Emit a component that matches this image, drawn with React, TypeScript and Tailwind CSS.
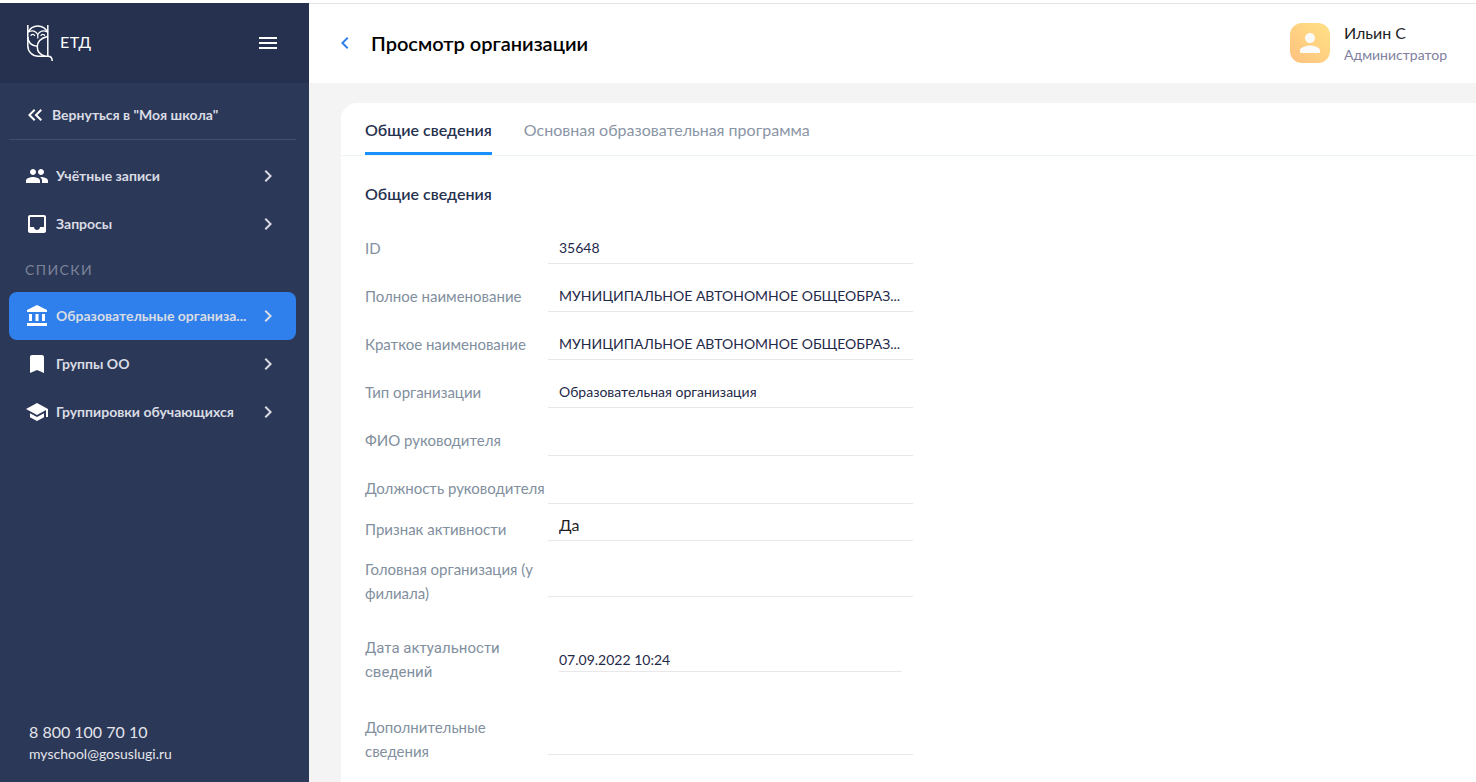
import type { ReactNode } from "react";
import clsx from "clsx";
import {
  MdAccountBalance,
  MdBookmark,
  MdChevronLeft,
  MdChevronRight,
  MdInbox,
  MdKeyboardDoubleArrowLeft,
  MdMenu,
  MdPeople,
  MdPerson,
  MdSchool,
} from "react-icons/md";

type NavItemProps = {
  icon: ReactNode;
  label: string;
  active?: boolean;
};

type Field = {
  id: string;
  label: string;
  value: string;
  rowClassName?: string;
  labelClassName?: string;
  fieldClassName?: string;
};

const defaultFieldClassName = "mb-2 px-[11px] pb-1 text-sm text-[#1f2a4a]";

const fields: Field[] = [
  { id: "org-id", label: "ID", value: "35648" },
  { id: "full-name", label: "Полное наименование", value: "МУНИЦИПАЛЬНОЕ АВТОНОМНОЕ ОБЩЕОБРАЗ..." },
  { id: "short-name", label: "Краткое наименование", value: "МУНИЦИПАЛЬНОЕ АВТОНОМНОЕ ОБЩЕОБРАЗ..." },
  { id: "org-type", label: "Тип организации", value: "Образовательная организация" },
  { id: "head-name", label: "ФИО руководителя", value: "" },
  { id: "head-position", label: "Должность руководителя", value: "" },
  {
    id: "is-active",
    label: "Признак активности",
    value: "Да",
    rowClassName: "h-[34px]",
    fieldClassName: "mb-[5px] px-[11px] pb-1 text-base text-[#1f1f1f]",
  },
  { id: "parent-org", label: "Головная организация (у филиала)", value: "", rowClassName: "mt-[11px] h-12" },
  {
    id: "updated-at",
    label: "Дата актуальности сведений",
    value: "07.09.2022 10:24",
    rowClassName: "mt-[31px] h-12",
    labelClassName: "font-['Roboto',sans-serif]",
    fieldClassName: "mx-[11px] mb-3 text-sm text-[#1f2a4a]",
  },
  { id: "extra", label: "Дополнительные сведения", value: "", rowClassName: "mt-[31px] h-12" },
];

function OwlLogo() {
  return (
    <svg className="h-[38px] w-7" fill="none" stroke="white" strokeWidth="1.5" viewBox="0 0 28 38">
      <path d="M1.8 1v20.500C1.800 28 6.500 32.300 12.500 32.300H22c2.600 0 4.200 1.400 4.200 4.700" />
      <path d="M21.800 1v31.300" />
      <path d="M1.800 8.500C4 4 7.500 1.900 11.800 1.900S19.600 4 21.800 8.500" />
      <path d="M21.800 12.500C15 14 11.300 18 11.300 23c0 4.500 3 8 8 9.300" />
      <path d="M1.800 13c0 5.500 4 9.200 9.500 9.200" />
      <path d="M2.500 8c3.500-2.200 7.800-1.200 9.300 2.600C13.300 6.800 17.600 5.800 21 8" strokeWidth="1.200" />
      <path d="M4.800 12c.4-2.300 3.400-2.300 4 0M14.800 12c.6-2.300 3.600-2.300 4 0" strokeWidth="1.200" />
      <path d="M11.800 10.500v4" strokeWidth="1.200" />
    </svg>
  );
}

function NavItem({ icon, label, active }: NavItemProps) {
  return (
    <a
      className={clsx("flex h-12 items-center gap-[7px] rounded-lg px-4 text-2xl text-white", active && "bg-[#2f80ed]")}
      href="#"
    >
      {icon}
      <span className="min-w-0 flex-1 truncate text-sm font-bold text-[#d9dce4]">{label}</span>
      <MdChevronRight className="shrink-0 text-[#d9dce4]" />
    </a>
  );
}

function Sidebar() {
  return (
    <aside className="flex w-[309px] shrink-0 flex-col bg-[#2c3857]">
      <div className="flex h-20 items-center bg-[#26314f] pr-[29px] pl-[26px]">
        <OwlLogo />
        <span className="ml-[6px] flex-1 pb-0.5 text-base tracking-wide text-white">ЕТД</span>
        <button aria-label="Меню" className="text-2xl text-white" type="button">
          <MdMenu />
        </button>
      </div>

      <nav className="mr-[13px] ml-[9px] flex-1">
        <a
          className="mt-2 mb-3 flex h-[49px] items-center gap-[5px] border-b border-[#424d6a] pl-[14px] text-sm font-bold text-[#d9dce4]"
          href="#"
        >
          <MdKeyboardDoubleArrowLeft className="text-2xl text-white" />
          Вернуться в "Моя школа"
        </a>
        <NavItem icon={<MdPeople />} label="Учётные записи" />
        <NavItem icon={<MdInbox />} label="Запросы" />
        <h2 className="flex h-11 items-center pl-4 text-sm tracking-widest text-[#7b839a]">СПИСКИ</h2>
        <NavItem active icon={<MdAccountBalance />} label="Образовательные организа..." />
        <NavItem icon={<MdBookmark />} label="Группы ОО" />
        <NavItem icon={<MdSchool />} label="Группировки обучающихся" />
      </nav>

      <footer className="flex flex-col pb-[18px] pl-[29px] text-[#e3e5eb]">
        <a className="text-base leading-6" href="tel:88001007010">
          8 800 100 70 10
        </a>
        <a className="text-sm leading-5" href="mailto:myschool@gosuslugi.ru">
          myschool@gosuslugi.ru
        </a>
      </footer>
    </aside>
  );
}

function Header() {
  return (
    <header className="flex h-20 items-center border-t border-[#e5e5e5] bg-white pr-[29px] pb-0.5 pl-6">
      <button aria-label="Назад" className="text-2xl text-[#2f80ed]" type="button">
        <MdChevronLeft />
      </button>
      <h1 className="ml-[14px] flex-1 text-xl font-semibold text-black">Просмотр организации</h1>
      <div className="flex items-center gap-[14px]">
        <div className="flex size-10 items-center justify-center rounded-xl bg-linear-to-tr from-[#ffc180] to-[#ffe184] text-3xl text-[#fafafa]">
          <MdPerson />
        </div>
        <div className="pt-1">
          <p className="text-base leading-5 text-[#1f1f1f]">Ильин С</p>
          <p className="text-sm leading-6 text-[#8080a0]">Администратор</p>
        </div>
      </div>
    </header>
  );
}

function FieldRow({
  id,
  label,
  value,
  rowClassName = "h-12",
  labelClassName,
  fieldClassName = defaultFieldClassName,
}: Field) {
  return (
    <div className={clsx("flex items-center", rowClassName)}>
      <label className={clsx("w-[183px] shrink-0 text-[15px] leading-6 text-[#828f9e]", labelClassName)} htmlFor={id}>
        {label}
      </label>
      <input
        className={clsx(
          "min-w-0 flex-1 self-end border-b border-[#e8e8eb] bg-transparent leading-[22px] text-ellipsis outline-none",
          fieldClassName,
        )}
        id={id}
        readOnly
        type="text"
        value={value}
      />
    </div>
  );
}

export default function App() {
  return (
    <div className="flex min-h-screen bg-white pt-[3px] font-['Lato','Liberation_Sans',sans-serif]">
      <Sidebar />
      <div className="flex min-w-0 flex-1 flex-col bg-[#f4f4f4]">
        <Header />
        <main className="mt-5 ml-8 flex-1 rounded-tl-2xl bg-white">
          <div className="flex h-[53px] gap-8 border-b border-[#eef6f0] px-6 text-base" role="tablist">
            <button
              aria-selected="true"
              className="border-b-[3px] border-[#1890ff] pt-1 font-semibold text-[#26314f]"
              role="tab"
              type="button"
            >
              Общие сведения
            </button>
            <button aria-selected="false" className="pt-px text-[#8a95a5]" role="tab" type="button">
              Основная образовательная программа
            </button>
          </div>
          <section className="max-w-[596px] px-6 pb-4">
            <h2 className="flex h-[68px] items-center pt-2 text-base font-semibold text-[#26314f]">Общие сведения</h2>
            {fields.map((field) => (
              <FieldRow key={field.id} {...field} />
            ))}
          </section>
        </main>
      </div>
    </div>
  );
}
